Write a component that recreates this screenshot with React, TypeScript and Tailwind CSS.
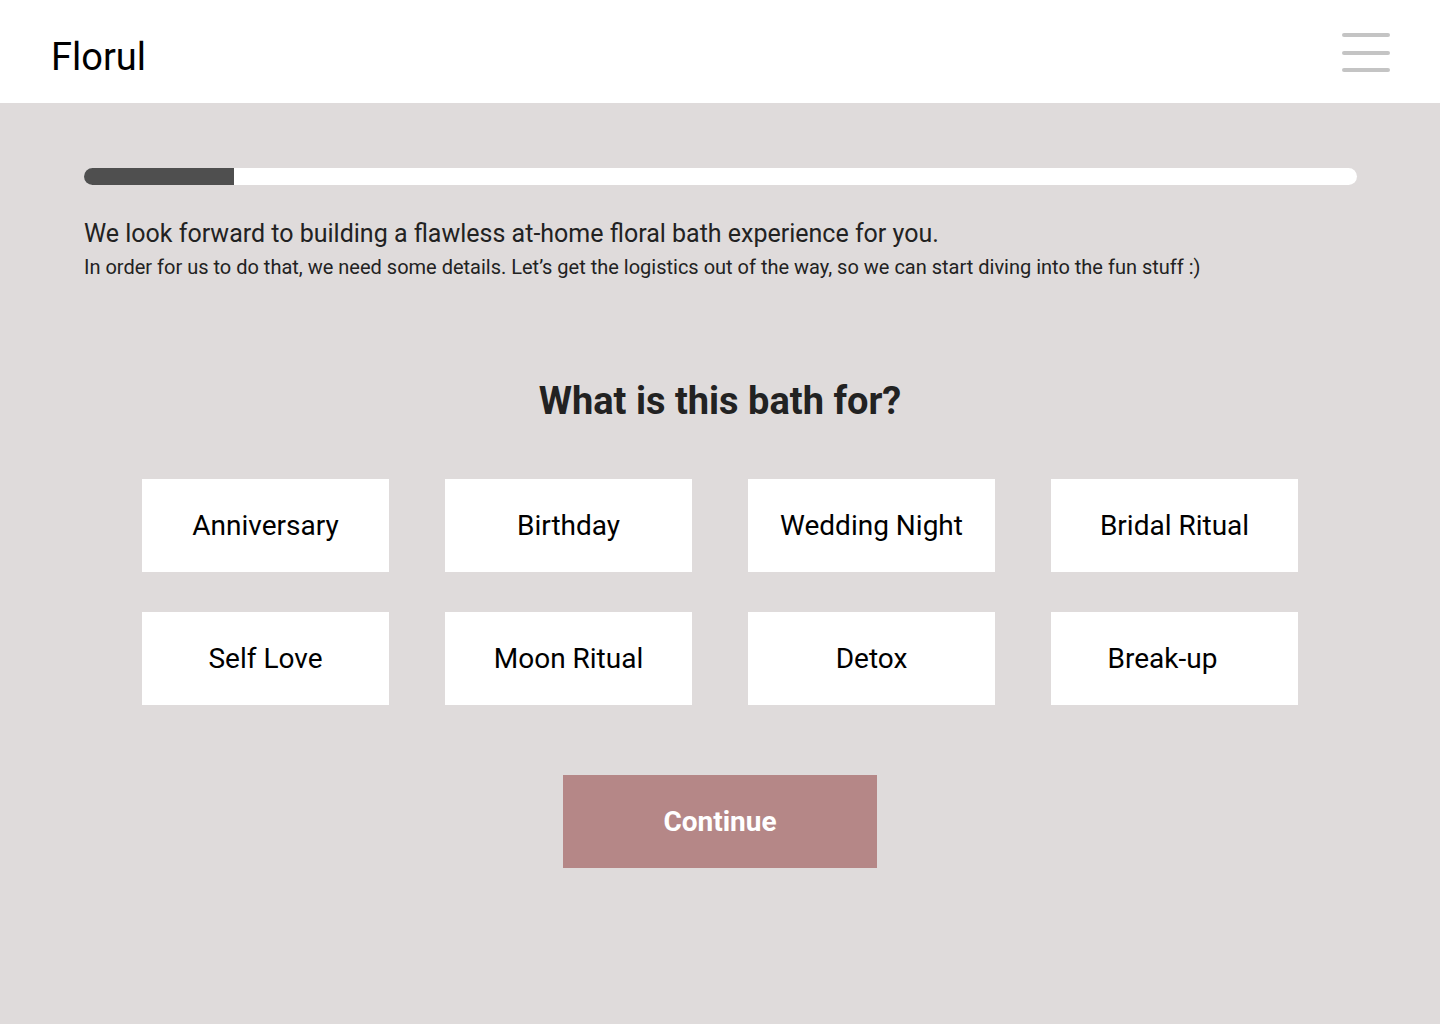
import React from "react";

const options = [
  { label: "Anniversary", cls: "" },
  { label: "Birthday", cls: "" },
  { label: "Wedding Night", cls: "" },
  { label: "Bridal Ritual", cls: "" },
  { label: "Self Love", cls: "" },
  { label: "Moon Ritual", cls: "" },
  { label: "Detox", cls: "" },
  { label: "Break-up", cls: "pr-[24px]" },
];

export default function App() {
  return (
    <div className="min-h-[1024px] w-full bg-[#dfdbdb] font-['Roboto',sans-serif]">
      <header className="flex h-[103px] items-center justify-between bg-white pl-[51px] pr-[50px]">
        <div className="pt-[10px] text-[38px] leading-none text-black font-['Roboto',sans-serif]">Florul</div>
        <div className="flex w-[48px] flex-col gap-[13.5px] pt-[2px]">
          <span className="block h-[4px] w-full rounded-full bg-[#c4c4c4]" />
          <span className="block h-[4px] w-full rounded-full bg-[#c4c4c4]" />
          <span className="block h-[4px] w-full rounded-full bg-[#c4c4c4]" />
        </div>
      </header>

      <main className="px-[84px] pt-[65px]">
        <div className="h-[17px] w-[1273px] overflow-hidden rounded-full bg-white">
          <div className="h-full w-[150px] bg-[#4f4f4f]" />
        </div>

        <p className="mt-[34px] text-[25px] leading-[30px] text-[#222222]">
          We look forward to building a flawless at-home floral bath experience for you.
        </p>
        <p className="mt-[6px] text-[20px] leading-[24px] text-[#222222]">
          In order for us to do that, we need some details. Let’s get the logistics out of the way, so we can start diving into the fun stuff :)
        </p>

        <h1 className="mt-[99px] text-center text-[38px] font-bold leading-[46px] text-[#222222]">
          What is this bath for?
        </h1>

        <div className="mx-auto mt-[55px] grid w-[1156px] grid-cols-4 gap-x-[56px] gap-y-[40px]">
          {options.map((o) => (
            <button
              key={o.label}
              className={`flex h-[93px] items-center justify-center bg-white text-[28px] text-black ${o.cls}`}
            >
              {o.label}
            </button>
          ))}
        </div>

        <div className="mt-[70px] flex justify-center">
          <button className="flex h-[93px] w-[314px] items-center justify-center bg-[#b58787] text-[28px] font-bold text-white">
            Continue
          </button>
        </div>
      </main>
    </div>
  );
}
